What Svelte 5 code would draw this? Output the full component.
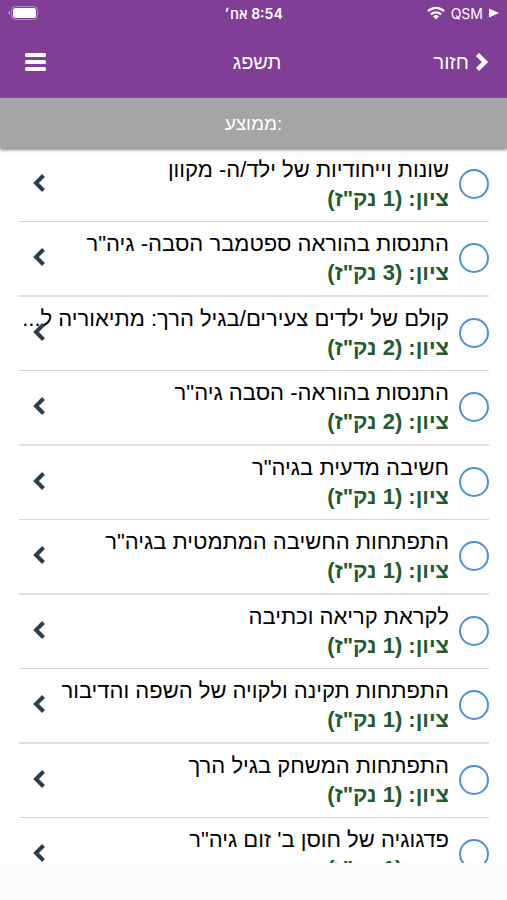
<script>
  const courses = [
    { title: 'שונות וייחודיות של ילד/ה- מקוון', points: 1 },
    { title: 'התנסות בהוראה ספטמבר הסבה- גיה"ר', points: 3 },
    { title: 'קולם של ילדים צעירים/בגיל הרך: מתיאוריה ל...', points: 2 },
    { title: 'התנסות בהוראה- הסבה גיה"ר', points: 2 },
    { title: 'חשיבה מדעית בגיה"ר', points: 1 },
    { title: 'התפתחות החשיבה המתמטית בגיה"ר', points: 1 },
    { title: 'לקראת קריאה וכתיבה', points: 1 },
    { title: 'התפתחות תקינה ולקויה של השפה והדיבור', points: 1 },
    { title: 'התפתחות המשחק בגיל הרך', points: 1 },
    { title: 'פדגוגיה של חוסן ב\' זום גיה"ר', points: 1 }
  ];
</script>

<div class="app" dir="rtl" lang="he">
  <div class="status">
    <div class="carrier">
      <svg width="10" height="10" viewBox="0 0 10 10" aria-hidden="true"><path d="M0 .5 10 5 0 9.5z" fill="#fff" /></svg>
      <span>QSM</span>
      <svg width="18" height="14" viewBox="0 0 18 14" aria-hidden="true">
        <g fill="none" stroke="#fff" stroke-width="2.3">
          <path d="M1 5.1a11.4 11.4 0 0 1 16 0" />
          <path d="M4 8.3a7.2 7.2 0 0 1 10 0" />
        </g>
        <path d="M6 10.4a4.4 4.4 0 0 1 6 0L9 13.6z" fill="#fff" />
      </svg>
    </div>
    <time>8:54 אח׳</time>
    <svg class="battery" width="30" height="14" viewBox="0 0 30 14" aria-hidden="true">
      <rect x="3.5" y=".5" width="26" height="13" rx="4" fill="none" stroke="#b58fc6" />
      <rect x="5" y="2" width="23" height="10" rx="2.5" fill="#fff" />
      <path d="M2 4.7v4.6Q.4 8.7 .4 7T2 4.7z" fill="#b58fc6" />
    </svg>
  </div>

  <header>
    <button class="back" type="button">
      <svg width="14" height="20" viewBox="0 0 14 20" aria-hidden="true"><path d="M2.5 2.5 10 10l-7.5 7.5" fill="none" stroke="#fff" stroke-width="4.5" /></svg>
      <span>חזור</span>
    </button>
    <h1>תשפג</h1>
    <button class="menu" type="button" aria-label="תפריט">
      <svg width="21" height="18" viewBox="0 0 21 18" aria-hidden="true">
        <rect width="21" height="4" rx="1.5" fill="#fff" />
        <rect y="7" width="21" height="4" rx="1.5" fill="#fff" />
        <rect y="14" width="21" height="4" rx="1.5" fill="#fff" />
      </svg>
    </button>
  </header>

  <div class="average" dir="ltr">ממוצע:</div>

  <ul>
    {#each courses as course, i}
      <li>
        <input type="checkbox" id="course-{i}" />
        <label for="course-{i}">
          <span class="title">{course.title}</span>
          <strong>ציון: ({course.points} נק"ז)</strong>
        </label>
        <button class="open" type="button" aria-label="פתח">
          <svg width="14" height="20" viewBox="0 0 14 20" aria-hidden="true"><path d="M11.5 2.5 4 10l7.5 7.5" fill="none" stroke="#2c3e50" stroke-width="4" /></svg>
        </button>
      </li>
    {/each}
  </ul>

  <footer></footer>
</div>

<style>
  :global(body) {
    background: #fff;
  }
  .app {
    display: flex;
    flex-direction: column;
    height: 100vh;
    font-family: 'Liberation Sans', Arial, sans-serif;
    color: #000;
  }
  button {
    display: flex;
    align-items: center;
    padding: 0;
    border: 0;
    background: none;
    color: inherit;
    font: inherit;
  }
  .status,
  header {
    display: grid;
    grid-template-columns: 1fr auto 1fr;
    align-items: center;
    flex: none;
    background: #803e97;
    color: #fff;
  }
  .status {
    height: 26px;
    padding: 0 8px;
    font-family: Inter, 'Open Sans', sans-serif;
    font-size: 14px;
  }
  .carrier {
    display: flex;
    align-items: center;
    gap: 6px;
  }
  time {
    font-weight: 600;
  }
  .battery {
    justify-self: end;
  }
  header {
    height: 72px;
    padding: 0 18px 0 25px;
    font-size: 20px;
  }
  .back {
    gap: 6px;
    justify-self: start;
  }
  .menu {
    justify-self: end;
  }
  h1 {
    margin: 0;
    font-size: 20px;
    font-weight: 400;
  }
  .average {
    position: relative;
    z-index: 1;
    flex: none;
    height: 50px;
    line-height: 52px;
    background: #a5a5a5;
    box-shadow: 0 2px 3px #888;
    color: #fff;
    font-size: 19px;
    text-align: center;
  }
  ul {
    flex: 1;
    min-height: 0;
    margin: 0;
    padding: 0 18px 0 19px;
    overflow: hidden;
    list-style: none;
  }
  li {
    position: relative;
    display: flex;
    align-items: center;
    gap: 10px;
    height: 71px;
    padding-bottom: 2px;
    border-bottom: 1px solid #d4d4d4;
  }
  li:nth-child(even) {
    border-bottom: 2px solid #dedede;
  }
  input {
    appearance: none;
    box-sizing: border-box;
    flex: none;
    width: 30px;
    height: 30px;
    margin: 0;
    border: 2px solid #4a90e2;
    border-radius: 50%;
    background: #fff;
  }
  input:checked {
    background: #4a90e2;
  }
  label {
    flex: 1;
    min-width: 0;
    font-size: 22px;
    line-height: 29px;
  }
  .title,
  strong {
    display: block;
    overflow: hidden;
    white-space: nowrap;
    text-overflow: ellipsis;
  }
  strong {
    color: #225c2e;
  }
  .open {
    position: absolute;
    left: 13px;
    top: 25px;
  }
  footer {
    flex: none;
    height: 37px;
    background: #fafafa;
  }
</style>
